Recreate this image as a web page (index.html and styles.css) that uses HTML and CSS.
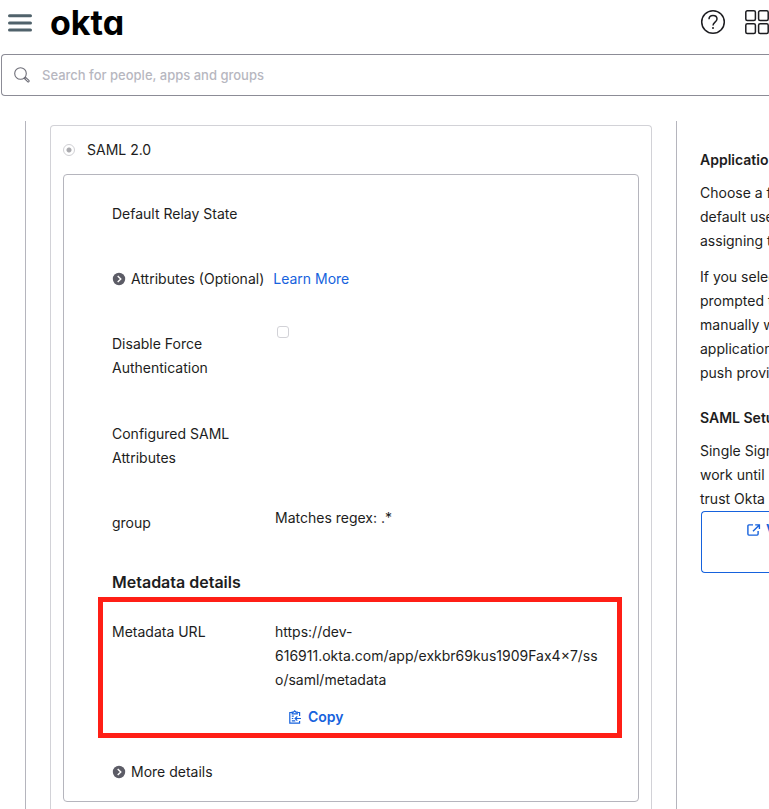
FILE: index.html
```html
<!DOCTYPE html>
<html lang="en">
<head>
<meta charset="utf-8">
<title>Okta</title>
<link rel="stylesheet" href="styles.css">
</head>
<body>
<header class="topbar">
  <button class="icon-btn" type="button" aria-label="Menu">
    <svg class="menu-icon" width="24" height="18" viewBox="0 0 24 18"><path d="M1.500 1.800h21M1.500 9h21M1.500 16h21" fill="none" stroke="#50626b" stroke-width="3" stroke-linecap="round"/></svg>
  </button>
  <a class="logo" href="#">okta</a>
  <button class="icon-btn help" type="button" aria-label="Help">
    <svg width="26" height="26" viewBox="0 0 26 26" fill="none" stroke="#1d1d21" stroke-width="1.500"><circle cx="13" cy="12" r="11.300"/><path d="M9 9.300C9 6.800 10.700 5.500 13 5.500s4 1.500 4 3.600c0 3-4 3.100-4 6.300"/><path d="M13 17v2"/></svg>
  </button>
  <button class="icon-btn apps" type="button" aria-label="Apps">
    <svg width="24" height="24" viewBox="0 0 24 24" fill="none" stroke="#1d1d21" stroke-width="1.500"><rect x=".8" y="-.2" width="9.600" height="9.600" rx="1.500"/><rect x="13.600" y="-.2" width="9.600" height="9.600" rx="1.500"/><rect x=".8" y="12.800" width="9.600" height="9.600" rx="1.500"/><rect x="13.600" y="12.800" width="9.600" height="9.600" rx="1.500"/></svg>
  </button>
</header>
<form class="search">
  <svg width="16" height="16" viewBox="0 0 16 16" fill="none" stroke="#6e6e78" stroke-width="1.100"><circle cx="6.500" cy="6.500" r="5.800"/><path d="M10.300 11.500l1.200-1.200 3.400 3.100a.9.9 0 0 1-1.300 1.300z"/></svg>
  <input class="search-input" type="search" aria-label="Search" placeholder="Search for people, apps and groups">
</form>
<div class="content">
  <main class="main">
    <section class="panel">
      <label class="mode"><input class="radio" type="radio" name="mode" checked disabled>SAML 2.0</label>
      <div class="settings">
        <div class="row"><span class="name">Default Relay State</span></div>
        <div class="row toggle-row">
          <button class="toggle" type="button"><svg width="14" height="14" viewBox="0 0 14 14"><circle cx="7" cy="7" r="6.200" fill="#5c5c66"/><path d="M5.700 3.900L8.800 7l-3.100 3.100" fill="none" stroke="#fff" stroke-width="1.400"/></svg>Attributes (Optional)</button>
          <a class="link" href="#">Learn More</a>
        </div>
        <div class="row field"><label class="name" for="force">Disable Force Authentication</label><input class="check" id="force" type="checkbox" disabled></div>
        <div class="row"><span class="name">Configured SAML Attributes</span></div>
        <div class="row"><span class="name">group</span><span class="value">Matches regex: .*</span></div>
        <h2 class="heading">Metadata details</h2>
        <div class="highlight">
          <span>Metadata URL</span>
          <div>
            <div>https://dev-<wbr>616911.okta.com/app/exkbr69kus1909Fax4×7/ss<wbr>o/saml/metadata</div>
            <button class="copy" type="button"><svg width="12" height="14" viewBox="0 0 12 14" fill="none" stroke="#1662dd" stroke-width="1.200"><path d="M3 2.500H.8v10.700h9.800v-2.200M8.500 2.500h2.100v3.500"/><path d="M3.200 3.800V2.200h1.300L5.700.800 6.900 2.200h1.300v1.600z"/><path d="M2.800 6.200h2M2.800 8.500h1.500M2.800 10.800h3.500M12 8.500H6.200M8.300 6.300L6.100 8.500l2.200 2.200"/></svg>Copy</button>
          </div>
        </div>
        <button class="toggle" type="button"><svg width="14" height="14" viewBox="0 0 14 14"><circle cx="7" cy="7" r="6.200" fill="#5c5c66"/><path d="M5.700 3.900L8.800 7l-3.100 3.100" fill="none" stroke="#fff" stroke-width="1.400"/></svg>More details</button>
      </div>
    </section>
  </main>
  <aside class="aside">
    <h3 class="aside-title">Applicatio</h3>
    <p>Choose a f<br>default use<br>assigning t</p>
    <p>If you selec<br>prompted t<br>manually w<br>application<br>push provis</p>
    <h3 class="aside-title second">SAML Setu</h3>
    <p>Single Sign<br>work until<br>trust Okta</p>
    <a class="view" href="#"><svg width="14" height="12" viewBox="0 0 14 12" fill="none" stroke="#1662dd" stroke-width="1.400"><path d="M6 .9H1.900a1 1 0 0 0-1 1v8.200a1 1 0 0 0 1 1h8.200a1 1 0 0 0 1-1V7"/><path d="M8.200.9h4.200v4.200M12.400.9L6 7.300"/></svg>V</a>
  </aside>
</div>
</body>
</html>
```
FILE: styles.css
```css
* { box-sizing: border-box; }
body {
  margin: 0;
  height: 100vh;
  display: flex;
  flex-direction: column;
  overflow: hidden;
  background: #fff;
  color: #1d1d21;
  font: 14px/24px Inter, sans-serif;
}
button, input { font: inherit; color: inherit; margin: 0; }
button { border: 0; padding: 0; background: none; }
a { text-decoration: none; }
svg { display: block; flex: none; overflow: visible; }

.topbar { display: flex; align-items: center; height: 46px; padding-left: 8px; margin-bottom: 8px; flex: none; }
.logo { margin-left: 18px; color: #000; font-size: 34px; font-weight: 700; line-height: 46px; font-feature-settings: "cv11"; }
.help { margin-left: auto; }
.apps { margin-left: 19px; }

.search {
  display: flex;
  align-items: center;
  flex: none;
  height: 42px;
  margin: 0 0 25px 1px;
  padding-left: 12px;
  gap: 12px;
  border: 1px solid #8c8c96;
  border-right: 0;
  border-radius: 4px 0 0 4px;
}
.search-input { flex: 1; min-width: 0; border: 0; padding: 0; outline: 0; background: none; font-size: 13px; font-weight: 500; }
.search-input::placeholder { color: #b7b7bf; opacity: 1; }

.content { display: flex; flex: 1; min-height: 0; }
.main { flex: 1; min-width: 0; margin-left: 25px; padding: 4px 24px 0; border-left: 1px solid #b5b5bd; }
.panel { height: 100%; padding: 12px; border: 1px solid #d2d2d7; border-bottom: 0; border-radius: 4px 4px 0 0; }
.mode { display: flex; align-items: center; gap: 12px; margin-bottom: 12px; }
.radio {
  appearance: none;
  width: 12px;
  height: 12px;
  border: 1px solid #d0d0d4;
  border-radius: 50%;
  background: radial-gradient(circle, #aaaaae 2px, #fff 3px);
}
.settings { padding: 27px 16px 17px 48px; border: 1px solid #b5b5bd; border-radius: 4px; }
.row { display: grid; grid-template-columns: 139px 1fr; column-gap: 24px; margin-bottom: 35px; }
.row > .name { padding-top: 6px; }
.row:first-child { margin-top: -6px; }
.field { margin-bottom: 36px; }
.value { padding-top: 1px; }
.toggle-row { display: flex; column-gap: 9px; padding-top: 6px; }
.toggle { display: flex; align-items: center; gap: 5px; }
.link { color: #1662dd; }
.check {
  appearance: none;
  width: 12px;
  height: 12px;
  margin-left: 2px;
  border: 1px solid #d2d2d7;
  border-radius: 3px;
}
.heading { margin: 0 0 3px; font-size: 16px; line-height: 24px; font-weight: 600; }
.highlight {
  display: grid;
  grid-template-columns: 139px 1fr;
  column-gap: 24px;
  margin: 0 0 22px -14px;
  padding: 18px 9px 4px;
  border: 5px solid #ff1f16;
}
.copy { display: flex; align-items: center; gap: 7px; margin: 13px 0 0 14px; color: #1662dd; font-weight: 600; }

.aside { width: 93px; flex: none; padding: 27px 0 0 23px; border-left: 1px solid #b5b5bd; overflow: hidden; white-space: nowrap; }
.aside p { margin: 0 0 12px; }
.aside p:last-of-type { margin: 0; }
.aside-title { margin: 0 0 9px; font-size: 14px; line-height: 24px; font-weight: 600; }
.second { margin-top: 21px; }
.view {
  display: flex;
  gap: 5px;
  height: 62px;
  margin-left: 1px;
  padding: 12px 0 0 45px;
  border: 1px solid #1662dd;
  border-right: 0;
  border-radius: 4px 0 0 4px;
  color: #1662dd;
  font-weight: 600;
  line-height: 12px;
}
```
